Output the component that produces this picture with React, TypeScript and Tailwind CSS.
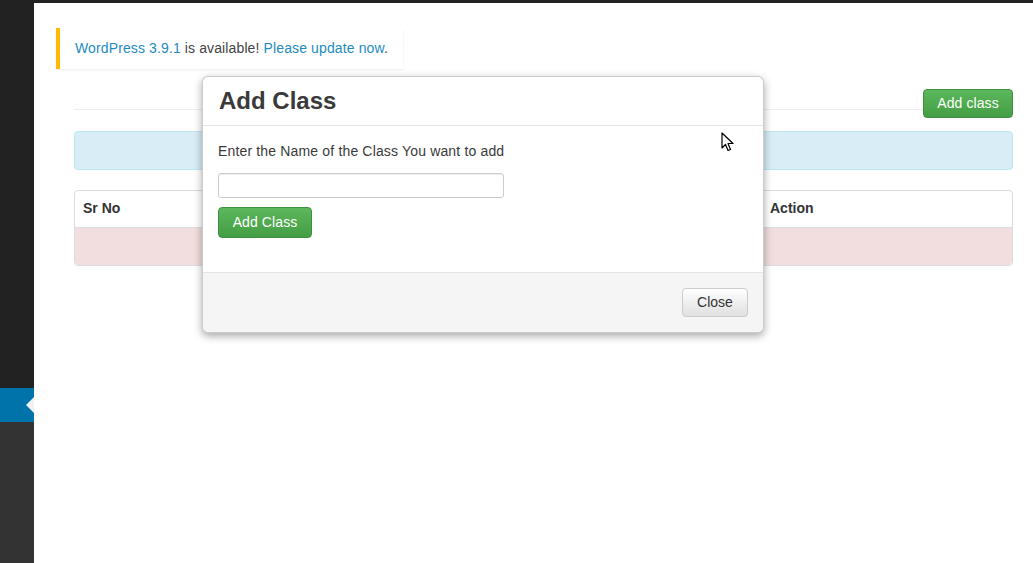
export default function App() {
  return (
    <div className="relative flex h-[563px] w-[1033px] flex-col overflow-hidden bg-white font-['Liberation_Sans',Arial,sans-serif] text-[14px] text-[#333]">
      <div className="h-[3px] w-full bg-[#222]" />
      <div className="flex flex-1">
        {/* admin sidebar */}
        <div className="flex w-[34px] flex-col">
          <div className="h-[385px] bg-[#222]" />
          <div className="relative h-[34px] bg-[#0073aa]">
            <div className="absolute right-0 top-[9px] h-0 w-0 border-y-[8px] border-r-[8px] border-y-transparent border-r-[#f1f1f1]" />
          </div>
          <div className="flex-1 bg-[#333]" />
        </div>

        {/* main area */}
        <div className="flex-1">
          <div className="ml-[22px] mt-[25px] flex h-[41px] w-[347px] items-center border-l-4 border-[#ffba00] bg-white pl-[15px] tracking-[0.12px] text-[#444] shadow-[0_1px_2px_rgba(0,0,0,0.08)]">
            <span>
              <span className="text-[#1e8cbe]">WordPress 3.9.1</span> is available!{" "}
              <span className="text-[#1e8cbe]">Please update now</span>.
            </span>
          </div>

          <div className="ml-[40px] mr-[20px]">
            <div className="flex h-[41px] items-start justify-end border-b border-[#eee] pt-[20px]">
              <button className="h-[29px] w-[90px] shrink-0 rounded-[4px] border border-[#3e8f3e] bg-gradient-to-b from-[#5cb85c] to-[#449d44] text-[14px] tracking-[0.1px] text-white">
                Add class
              </button>
            </div>

            <div className="mt-[21px] h-[39px] rounded-[4px] border border-[#bce8f1] bg-[#d9edf7]" />

            <div className="mt-[20px] overflow-hidden rounded-[4px] border border-[#ddd]">
              <div className="flex h-[37px] items-center border-b border-[#ddd] pb-[2px] font-bold">
                <div className="w-[687px] pl-[8px]">Sr No</div>
                <div className="pl-[8px]">Action</div>
              </div>
              <div className="h-[37px] bg-[#f2dede]" />
            </div>
          </div>
        </div>
      </div>

      {/* modal */}
      <div className="absolute left-[202px] top-[76px] flex w-[562px] flex-col rounded-[6px] border border-[rgba(0,0,0,0.2)] bg-white shadow-[0_3px_9px_rgba(0,0,0,0.35)]">
        <div className="flex h-[49px] items-center border-b border-[#e5e5e5] px-[16px]">
          <h4 className="text-[24px] font-bold leading-none text-[#3a3a3a]">Add Class</h4>
        </div>
        <div className="h-[146px] px-[15px] pt-[15px]">
          <p className="leading-[20px] tracking-[0.16px] text-[#3a3a3a]">Enter the Name of the Class You want to add</p>
          <div className="mt-[12px] h-[25px] w-[286px] rounded-[3px] border border-[#ccc] bg-white shadow-[inset_0_1px_1px_rgba(0,0,0,0.075)]" />
          <button className="mt-[9px] h-[31px] w-[94px] rounded-[4px] border border-[#3e8f3e] bg-gradient-to-b from-[#5cb85c] to-[#449d44] text-[14px] tracking-[0.1px] text-white">
            Add Class
          </button>
        </div>
        <div className="flex h-[60px] items-center justify-end rounded-b-[6px] border-t border-[#e5e5e5] bg-[#f5f5f5] pr-[15px]">
          <button className="h-[29px] w-[66px] rounded-[4px] border border-[#ccc] bg-gradient-to-b from-white to-[#e0e0e0] text-[14px] text-[#333]">
            Close
          </button>
        </div>
      </div>

      {/* mouse pointer */}
      <svg className="absolute left-[721px] top-[132px]" width="13" height="20" viewBox="0 0 13 20">
        <path d="M1 1 L1 16 L4.5 12.5 L7 18.5 L9.5 17.5 L7 11.5 L12 11.5 Z" fill="white" stroke="black" strokeWidth="1.2" strokeLinejoin="round" />
      </svg>
    </div>
  );
}
